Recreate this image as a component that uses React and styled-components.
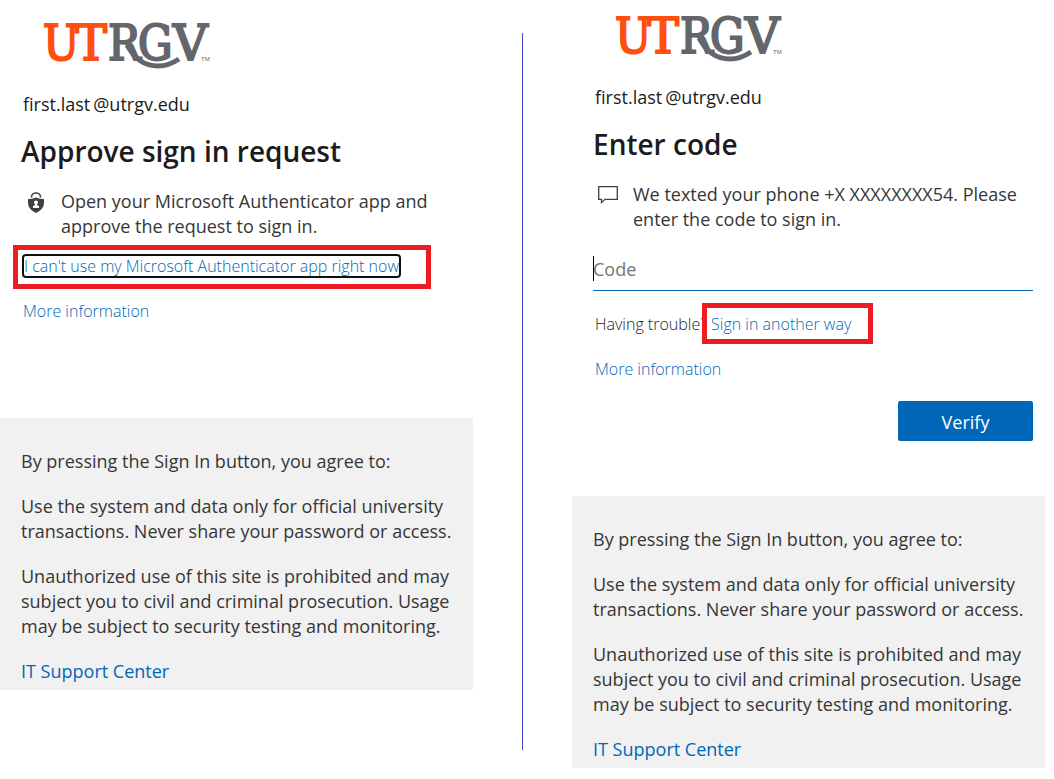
import React from "react";
import styled, { createGlobalStyle } from "styled-components";

const GlobalStyle = createGlobalStyle`
  * {
    box-sizing: border-box;
  }

  body {
    margin: 0;
    background: #ffffff;
    color: #363636;
    font-family: "Open Sans", "Noto Sans", sans-serif;
    font-size: 18px;
    line-height: 25px;
  }
`;

const Page = styled.main`
  display: grid;
  grid-template-columns: 1fr 1px 1fr;
  column-gap: 49px;
  align-items: start;
  padding-right: 9px;
`;

const Divider = styled.div`
  align-self: stretch;
  margin: 33px 0 18px;
  background: #3f48cc;
`;

const Screen = styled.section`
  padding-top: ${(props) => props.$top}px;
`;

const Content = styled.div`
  display: flex;
  flex-direction: column;
  padding: 0 12px 0 21px;
`;

const LogoSvg = styled.svg`
  display: block;
  margin-left: 22px;
`;

const Email = styled.div`
  margin: 19px 0 0 2px;
  color: #1b1b1b;

  span {
    margin-left: 3px;
  }
`;

const Title = styled.h1`
  margin: 14px 0 0;
  font-size: 28px;
  line-height: 40px;
  font-weight: 600;
  color: #1b1b1b;
`;

const Message = styled.div`
  display: grid;
  grid-template-columns: 30px 1fr;
  column-gap: 10px;
  margin-top: 18px;

  svg {
    margin: 3px 0 0 5px;
  }
`;

const Row = styled.div`
  margin: ${(props) => props.$gap}px 0 0 2px;
  font-size: 16px;
  font-weight: 300;
  line-height: 20px;
  color: #1b1b1b;
`;

const Link = styled.a`
  color: #0067b8;
  text-decoration: none;
`;

const FocusedLink = styled(Link)`
  display: inline-block;
  padding: 1px;
  border-radius: 3px;
  outline: 2px solid #101010;
  outline-offset: -1px;
`;

/* red frame laid over whatever it calls out */
const Callout = styled.span`
  position: relative;
  display: inline-block;

  &::after {
    content: "";
    position: absolute;
    inset: ${(props) => props.$inset};
    border: 5px solid #ed1c24;
    pointer-events: none;
  }
`;

const Field = styled.label`
  position: relative;
  display: block;
  margin-top: 17px;

  &::before {
    content: "";
    position: absolute;
    left: 0;
    top: 7px;
    width: 1px;
    height: 25px;
    background: #000000;
  }
`;

const CodeInput = styled.input`
  display: block;
  width: 100%;
  height: 42px;
  padding: 0 0 1px;
  border: 0;
  border-bottom: 1px solid #0067b8;
  border-radius: 0;
  outline: 0;
  background: transparent;
  font: inherit;
  color: #1b1b1b;

  &::placeholder {
    color: #757575;
    opacity: 1;
  }
`;

const VerifyButton = styled.button`
  align-self: flex-end;
  width: 135px;
  height: 40px;
  margin-top: 22px;
  padding: 2px 0 0;
  border: 0;
  border-radius: 2px;
  background: #0067b8;
  color: #ffffff;
  font: inherit;
`;

const Terms = styled.footer`
  display: flex;
  flex-direction: column;
  gap: 20px;
  margin-top: ${(props) => props.$gap}px;
  padding: 31px 16px 6px 21px;
  background: #f1f1f1;

  p {
    margin: 0;
  }
`;

const Logo = () => {
  return (
    <LogoSvg width="170" height="62" viewBox="0 -10 170 62" role="img" aria-label="UTRGV">
      <text
        y="39"
        fontFamily="DejaVu Serif Condensed, DejaVu Serif, serif"
        fontSize="48"
        strokeWidth="2"
        fill="#63666a"
        stroke="#63666a"
      >
        <tspan x="0" fill="#ff4f0f" stroke="#ff4f0f">U</tspan>
        <tspan x="32" fill="#ff4f0f" stroke="#ff4f0f" fontFamily="DejaVu Serif">T</tspan>
        <tspan x="65">R</tspan>
        <tspan x="95">G</tspan>
        <tspan x="130" fontFamily="DejaVu Serif">V</tspan>
      </text>
      <path
        d="M84 24C92 38 101 45 115 45C124 45 130 42 136 38"
        fill="none"
        stroke="#63666a"
        strokeWidth="5"
      />
      <text x="158" y="40" fontFamily="Liberation Sans, sans-serif" fontSize="6" fill="#63666a">
        TM
      </text>
    </LogoSvg>
  );
};

const LockIcon = () => {
  return (
    <svg width="20" height="22" viewBox="0 0 20 22" aria-hidden="true">
      <path d="M5.5 5.5V5A4.5 4 0 0 1 14.5 5V5.5" fill="none" stroke="#404040" strokeWidth="1.6" />
      <path d="M2 7Q6 7 10 5.5Q14 7 18 7V11Q18 17 10 21Q2 17 2 11Z" fill="#404040" />
      <circle cx="10" cy="10.5" r="2" fill="#ffffff" />
      <path d="M9 11H11V13L13 14V16H7V14L9 13Z" fill="#ffffff" />
    </svg>
  );
};

const ChatIcon = () => {
  return (
    <svg width="22" height="22" viewBox="0 0 22 22" aria-hidden="true">
      <path
        d="M.7 1.7H19.3V14.3H7L3.5 17.6V14.3H.7Z"
        fill="none"
        stroke="#404040"
        strokeWidth="1.3"
      />
    </svg>
  );
};

const Header = ({ title }) => {
  return (
    <>
      <Logo />
      <Email>
        first.last<span>@utrgv.edu</span>
      </Email>
      <Title>{title}</Title>
    </>
  );
};

const TermsOfUse = ({ gap }) => {
  return (
    <Terms $gap={gap}>
      <p>By pressing the Sign In button, you agree to:</p>
      <p>
        Use the system and data only for official university transactions. Never
        share your password or access.
      </p>
      <p>
        Unauthorized use of this site is prohibited and may subject you to civil
        and criminal prosecution. Usage may be subject to security testing and
        monitoring.
      </p>
      <p>
        <Link href="#support">IT Support Center</Link>
      </p>
    </Terms>
  );
};

const App = () => {
  return (
    <Page>
      <GlobalStyle />
      <Screen $top={11}>
        <Content>
          <Header title="Approve sign in request" />
          <Message>
            <LockIcon />
            <span>
              Open your Microsoft Authenticator app and approve the request to
              sign in.
            </span>
          </Message>
          <Row $gap={16}>
            <Callout $inset="-10px -31px -12px -10px">
              <FocusedLink href="#other">
                I can't use my Microsoft Authenticator app right now
              </FocusedLink>
            </Callout>
          </Row>
          <Row $gap={24}>
            <Link href="#info">More information</Link>
          </Row>
        </Content>
        <TermsOfUse gap={97} />
      </Screen>
      <Divider />
      <Screen $top={4}>
        <Content>
          <Header title="Enter code" />
          <Message>
            <ChatIcon />
            <span>
              We texted your phone +X XXXXXXXX54. Please enter the code to sign
              in.
            </span>
          </Message>
          <Field>
            <CodeInput type="text" placeholder="Code" aria-label="Code" />
          </Field>
          <Row $gap={23}>
            Having trouble?{" "}
            <Callout $inset="-11px -22px -10px -9px">
              <Link href="#another">Sign in another way</Link>
            </Callout>
          </Row>
          <Row $gap={25}>
            <Link href="#info">More information</Link>
          </Row>
          <VerifyButton type="submit">Verify</VerifyButton>
        </Content>
        <TermsOfUse gap={55} />
      </Screen>
    </Page>
  );
};

export default App;
